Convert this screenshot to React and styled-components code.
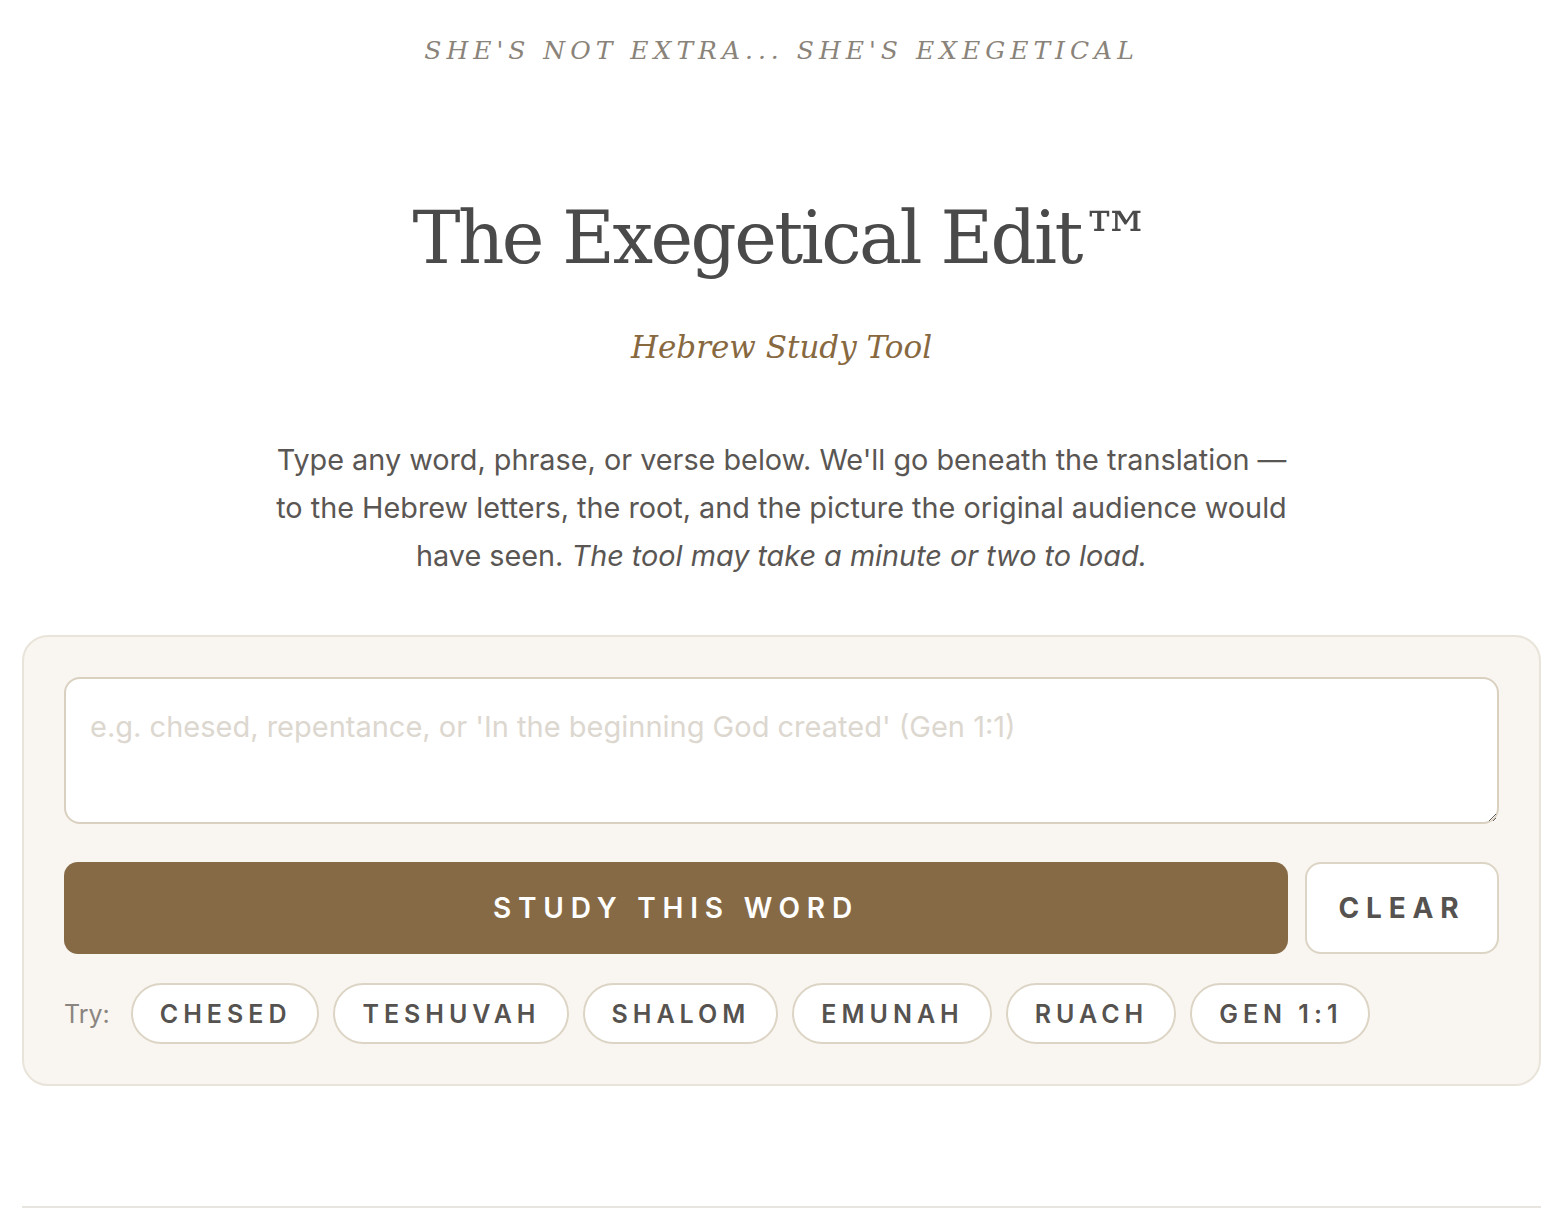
import styled, { createGlobalStyle } from 'styled-components';

const GlobalStyle = createGlobalStyle`
  html, body {
    margin: 0;
    padding: 0;
    background: #ffffff;
  }
  body {
    font-family: Inter, "Noto Sans", sans-serif;
  }
`;

const examples = ['Chesed', 'Teshuvah', 'Shalom', 'Emunah', 'Ruach', 'Gen 1:1'];

const App = () => {
  return (
    <>
      <GlobalStyle />
      <Page>
        <Tagline>She's not extra... she's exegetical</Tagline>
        <Title>The Exegetical Edit™</Title>
        <Subtitle>Hebrew Study Tool</Subtitle>
        <Intro>
          Type any word, phrase, or verse below. We'll go beneath the translation —
          to the Hebrew letters, the root, and the picture the original audience would
          have seen. <em>The tool may take a minute or two to load.</em>
        </Intro>
        <Card>
          <Input placeholder="e.g. chesed, repentance, or 'In the beginning God created' (Gen 1:1)" />
          <Actions>
            <StudyButton>Study this word</StudyButton>
            <ClearButton>Clear</ClearButton>
          </Actions>
          <TryRow>
            <TryLabel>Try:</TryLabel>
            {examples.map((word) => (
              <Chip key={word}>{word}</Chip>
            ))}
          </TryRow>
        </Card>
        <Divider />
      </Page>
    </>
  );
};

const Page = styled.div`
  padding: 0 23px 0 22px;
  display: flex;
  flex-direction: column;
  align-items: center;
`;

const Tagline = styled.div`
  margin-top: 34px;
  font-family: "DejaVu Serif", Georgia, serif;
  font-style: italic;
  font-size: 25px;
  line-height: 34px;
  letter-spacing: 5px;
  text-transform: uppercase;
  color: #8a8379;
`;

const Title = styled.h1`
  margin: 120px 0 0;
  font-family: "DejaVu Serif", Georgia, serif;
  font-weight: 400;
  font-size: 72px;
  line-height: 100px;
  color: #4a4a4a;
  letter-spacing: -2.5px;
`;

const Subtitle = styled.div`
  margin-top: 39px;
  font-family: "DejaVu Serif", Georgia, serif;
  font-style: italic;
  font-size: 31px;
  line-height: 40px;
  color: #87683f;
`;

const Intro = styled.p`
  margin: 69px 0 0;
  max-width: 1030px;
  text-align: center;
  font-size: 28.8px;
  line-height: 48px;
  color: #5a5653;

  em {
    font-style: italic;
  }
`;

const Card = styled.div`
  margin-top: 55px;
  align-self: stretch;
  box-sizing: border-box;
  background: #f9f6f1;
  border: 2px solid #e9e4da;
  border-radius: 26px;
  padding: 40px;
  display: flex;
  flex-direction: column;
`;

const Input = styled.textarea`
  box-sizing: border-box;
  height: 147px;
  width: 100%;
  padding: 30px 24px;
  border: 2px solid #d9d0c0;
  border-radius: 16px;
  background: #ffffff;
  font-family: Inter, "Noto Sans", sans-serif;
  font-size: 29px;
  line-height: 36px;
  color: #4a4a4a;
  resize: vertical;
  outline: none;

  &::placeholder {
    color: #dcd7cf;
  }
`;

const Actions = styled.div`
  margin-top: 38px;
  display: flex;
  gap: 17px;
`;

const StudyButton = styled.button`
  flex: 1;
  height: 92px;
  border: none;
  border-radius: 14px;
  background: #866a46;
  color: #ffffff;
  font-family: Inter, "Noto Sans", sans-serif;
  font-size: 28px;
  font-weight: 600;
  letter-spacing: 6.8px;
  text-transform: uppercase;
  cursor: pointer;
`;

const ClearButton = styled.button`
  width: 194px;
  height: 92px;
  border: 2px solid #dcd4c4;
  border-radius: 16px;
  background: #ffffff;
  color: #555250;
  font-family: Inter, "Noto Sans", sans-serif;
  font-size: 28px;
  font-weight: 700;
  letter-spacing: 6.8px;
  text-transform: uppercase;
  cursor: pointer;
`;

const TryRow = styled.div`
  margin-top: 29px;
  display: flex;
  align-items: center;
  gap: 14px;
`;

const TryLabel = styled.span`
  font-size: 25px;
  color: #8a8580;
  margin-right: 7px;
`;

const Chip = styled.button`
  height: 61px;
  padding: 0 26px 0 27px;
  border: 2px solid #dcd4c4;
  border-radius: 31px;
  background: #ffffff;
  color: #555250;
  font-family: Inter, "Noto Sans", sans-serif;
  font-size: 25px;
  font-weight: 600;
  letter-spacing: 5px;
  text-transform: uppercase;
  cursor: pointer;
`;

const Divider = styled.hr`
  align-self: stretch;
  margin: 120px 0 0;
  border: none;
  border-top: 2px solid #e8e5e0;
`;

export default App;
